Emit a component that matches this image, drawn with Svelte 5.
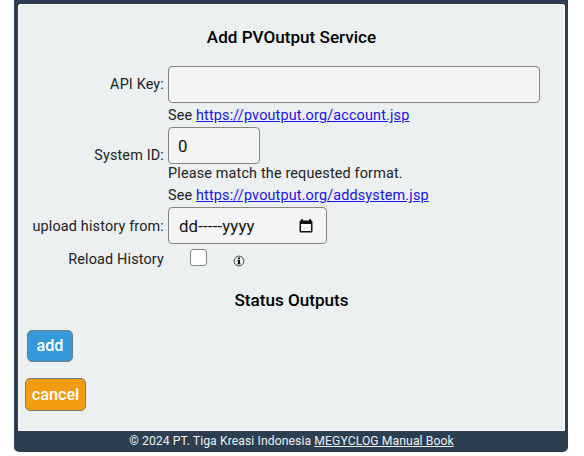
<script>
  let apiKey = $state('');
  let systemId = $state('0');
  let reload = $state(false);
</script>

<main class="frame">
  <form class="panel" onsubmit={(e) => e.preventDefault()}>
    <h2 class="title">Add PVOutput Service</h2>

    <div class="row api">
      <label for="api-key">API Key:</label>
      <input id="api-key" class="field wide" type="text" bind:value={apiKey} />
    </div>
    <p class="hint first">See <a href="#account">https://pvoutput.org/account.jsp</a></p>

    <div class="row system">
      <label for="system-id">System ID:</label>
      <input id="system-id" class="field short" type="text" bind:value={systemId} />
    </div>
    <p class="hint format">Please match the requested format.</p>
    <p class="hint second">See <a href="#addsystem">https://pvoutput.org/addsystem.jsp</a></p>

    <div class="row date">
      <span class="label">upload history from:</span>
      <div class="field picker">
        <span class="mask">dd-----yyyy</span>
        <svg width="14" height="16" viewBox="0 0 14 16" aria-hidden="true">
          <path d="M2.2 1h1.7v1.5h6.2V1h1.7v1.5h.2c.9 0 1.5.6 1.5 1.5v9c0 .9-.6 1.5-1.5 1.5H2c-.9 0-1.5-.6-1.5-1.5V4c0-.9.6-1.5 1.5-1.5h.2zM2 6v7h10V6z" fill="#111" fill-rule="evenodd" />
        </svg>
      </div>
    </div>

    <div class="row reload">
      <label for="reload">Reload History</label>
      <input id="reload" class="check" type="checkbox" bind:checked={reload} />
      <svg class="info" width="12" height="12" viewBox="0 0 12 12" aria-hidden="true">
        <circle cx="6" cy="6" r="4.9" fill="none" stroke="#333" stroke-width="0.9" />
        <path d="M5 2.4h2v1.6H5zM4.4 4.8H7v3.6h.7v.9H4.4v-.9H5V5.7h-.6z" fill="#111" />
      </svg>
    </div>

    <h2 class="title status">Status Outputs</h2>

    <button class="btn add" type="submit">add</button>
    <button class="btn cancel" type="button">cancel</button>
  </form>
  <footer>© 2024 PT. Tiga Kreasi Indonesia <a href="#manual">MEGYCLOG Manual Book</a></footer>
</main>

<style>
  :global(body) {
    background: #fff;
    overflow: hidden;
  }
  .frame {
    box-sizing: border-box;
    width: 554px;
    height: 452px;
    margin-left: 14px;
    padding: 4px 3px 0 4px;
    background: #2c3e50;
    border-radius: 0 0 5px 5px;
    font-family: Roboto, "Liberation Sans", sans-serif;
    font-size: 14.4px;
    letter-spacing: 0.16px;
    color: #222;
  }
  .panel {
    box-sizing: border-box;
    display: flex;
    flex-direction: column;
    align-items: flex-start;
    height: 427px;
    padding-top: 22px;
    background: #ecf0f1;
    border: 1px solid #f9fbfb;
    border-radius: 2px 2px 0 0;
  }
  .title {
    align-self: stretch;
    margin: 0;
    height: 20px;
    line-height: 20px;
    text-align: center;
    font-size: 17.1px;
    font-weight: 500;
    letter-spacing: 0;
    color: #000;
  }
  .row {
    display: flex;
    align-items: center;
    gap: 4px;
    height: 37px;
  }
  .row label,
  .label {
    width: 145px;
    text-align: right;
    white-space: nowrap;
  }
  .field {
    box-sizing: border-box;
    height: 37px;
    margin: 0;
    padding: 0 9px;
    border: 1px solid #858585;
    border-radius: 4px;
    background: #f5f5f5;
    color: #111;
    font: 16.8px Roboto, "Liberation Sans", sans-serif;
  }
  .api {
    margin-top: 19px;
  }
  .wide {
    width: 372px;
  }
  .short {
    width: 92px;
  }
  .hint {
    margin: 0 0 0 149px;
    height: 20px;
    line-height: 20px;
    white-space: nowrap;
  }
  .first {
    margin-top: 3px;
  }
  a {
    color: #1a12e6;
  }
  .system {
    margin-top: 1px;
  }
  .system label {
    padding-top: 19px;
  }
  .format {
    height: 18px;
    margin-top: 1px;
    line-height: 18px;
  }
  .second {
    margin-top: 3px;
  }
  .date {
    margin-top: 1px;
  }
  .date .label {
    padding-top: 1px;
  }
  .picker {
    display: flex;
    align-items: center;
    justify-content: space-between;
    width: 159px;
    padding: 0 13px 0 10px;
  }
  .reload {
    height: 20px;
    margin-top: 5px;
  }
  .check {
    box-sizing: border-box;
    appearance: none;
    width: 17px;
    height: 17px;
    margin: 0 0 3px 22px;
    border: 1px solid #858585;
    border-radius: 3px;
    background: #fff;
  }
  .info {
    margin: 4px 0 0 22px;
  }
  .status {
    margin-top: 21px;
  }
  .btn {
    box-sizing: border-box;
    padding: 0 0 1px;
    border: 1px solid #737b80;
    border-radius: 5px;
    color: #fff;
    font: 500 16.2px Roboto, "Liberation Sans", sans-serif;
  }
  .add {
    width: 46px;
    height: 32px;
    margin: 20px 0 0 8px;
    background: #3498db;
  }
  .cancel {
    width: 61px;
    height: 33px;
    margin: 16px 0 0 6px;
    padding-bottom: 0;
    background: #f39c12;
  }
  footer {
    height: 20px;
    line-height: 20px;
    text-align: center;
    font-size: 12.2px;
    letter-spacing: 0.08px;
    color: #ecf0f1;
    white-space: nowrap;
  }
  footer a {
    color: inherit;
  }
</style>
